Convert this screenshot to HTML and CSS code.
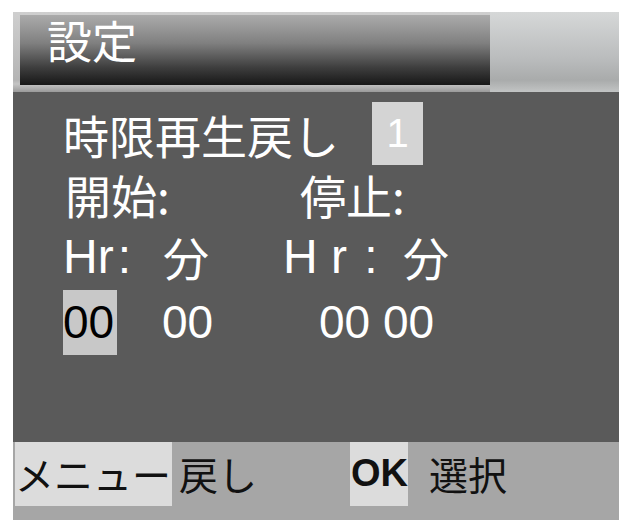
FILE: index.html
```html
<!DOCTYPE html>
<html lang="ja">
<head>
    <meta charset="UTF-8">
    <meta name="viewport" content="width=device-width, initial-scale=1.0">
    <title>設定</title>
    <link rel="stylesheet" href="styles.css">
</head>
<body>

    <div class="screen">
        <!-- Title bar -->
        <div class="header">
            <div class="title-bar">設定</div>
            <div class="title-side"></div>
        </div>

        <!-- Settings body -->
        <div class="body">
            <div class="row row-1">
                <span class="label-wide">時限再生戻し</span>
                <span class="value-box">1</span>
            </div>
            <div class="row row-2">
                <span class="col-start">開始:</span>
                <span>停止:</span>
            </div>
            <div class="row row-3">
                <span class="latin col-hr">Hr<span class="colon">:</span></span>
                <span class="col-min">分</span>
                <span class="latin col-hr2">H r <span class="colon">:</span></span>
                <span>分</span>
            </div>
            <div class="row row-4">
                <span class="digits digit-box">00</span>
                <span class="digits col-d2">00</span>
                <span class="digits">00 00</span>
            </div>
        </div>

        <!-- Soft key bar -->
        <div class="footer">
            <span class="key key-light key-menu">メニュー</span>
            <span class="key key-back">戻し</span>
            <span class="key key-light key-ok">OK</span>
            <span class="key">選択</span>
        </div>
    </div>

</body>
</html>
```

FILE: styles.css
```css
body {
    margin: 0;
    background-color: #fff;
    font-family: "Noto Sans CJK JP", "Liberation Sans", sans-serif;
}

.screen {
    width: 606px;
    margin: 12px 0 0 13px;
    display: flex;
    flex-direction: column;
}

/* Title bar */
.header {
    display: flex;
    height: 80px;
    background: linear-gradient(#cfcfcf, #b4b4b4 85%, #c4c4c4 90%, #9a9a9a);
}

.title-bar {
    width: 470px;
    height: 70px;
    margin: 3px 0 0 7px;
    box-sizing: border-box;
    padding-left: 27px;
    background: linear-gradient(#ababab, #808080 40%, #3e3e3e 75%, #171717);
    color: #fff;
    font-size: 45px;
    line-height: 50px;
}

.title-side {
    flex: 1;
    background: linear-gradient(#d6d8d8, #b9bbbc 60%, #a9abab 85%, #c2c4c4);
}

/* Body */
.body {
    height: 350px;
    background-color: #5a5a5a;
    padding: 10px 0 0 50px;
    box-sizing: border-box;
    color: #fff;
    font-size: 46px;
}

.row {
    display: flex;
    align-items: center;
}

.row-1 { height: 63px; }
.row-2 { height: 58px; }
.row-3 { height: 66px; }
.row-4 { height: 66px; }

.label-wide { width: 309px; }

.value-box {
    width: 51px;
    height: 63px;
    background-color: #d4d4d4;
    color: #fff;
    font-family: "Liberation Sans", sans-serif;
    font-size: 40px;
    display: flex;
    align-items: center;
    justify-content: center;
}

.col-start { width: 235px; padding-left: 2px; }

.latin {
    font-family: "Liberation Sans", sans-serif;
    font-size: 48px;
}

.colon { margin-left: 4px; }

.col-hr { width: 100px; }
.col-min { width: 120px; }
.col-hr2 { width: 120px; }

.digits {
    font-family: "Liberation Sans", sans-serif;
    font-size: 46px;
}

.digit-box {
    width: 54px;
    height: 65px;
    background-color: #c8c8c8;
    color: #000;
    display: flex;
    align-items: center;
}

.col-d2 { width: 157px; margin-left: 45px; }

/* Soft key bar */
.footer {
    height: 78px;
    background-color: #a6a6a6;
    display: flex;
    align-items: flex-start;
    color: #111;
    font-size: 39px;
}

.key {
    height: 64px;
    line-height: 62px;
}

.key-light { background-color: #dcdcdc; }

.key-menu {
    width: 157px;
    margin-left: 2px;
}

.key-back {
    width: 171px;
    padding-left: 7px;
}

.key-ok {
    width: 58px;
    box-sizing: border-box;
    padding-left: 1px;
    margin-right: 21px;
    font-family: "Liberation Sans", sans-serif;
    font-weight: bold;
    font-size: 38px;
}
```
